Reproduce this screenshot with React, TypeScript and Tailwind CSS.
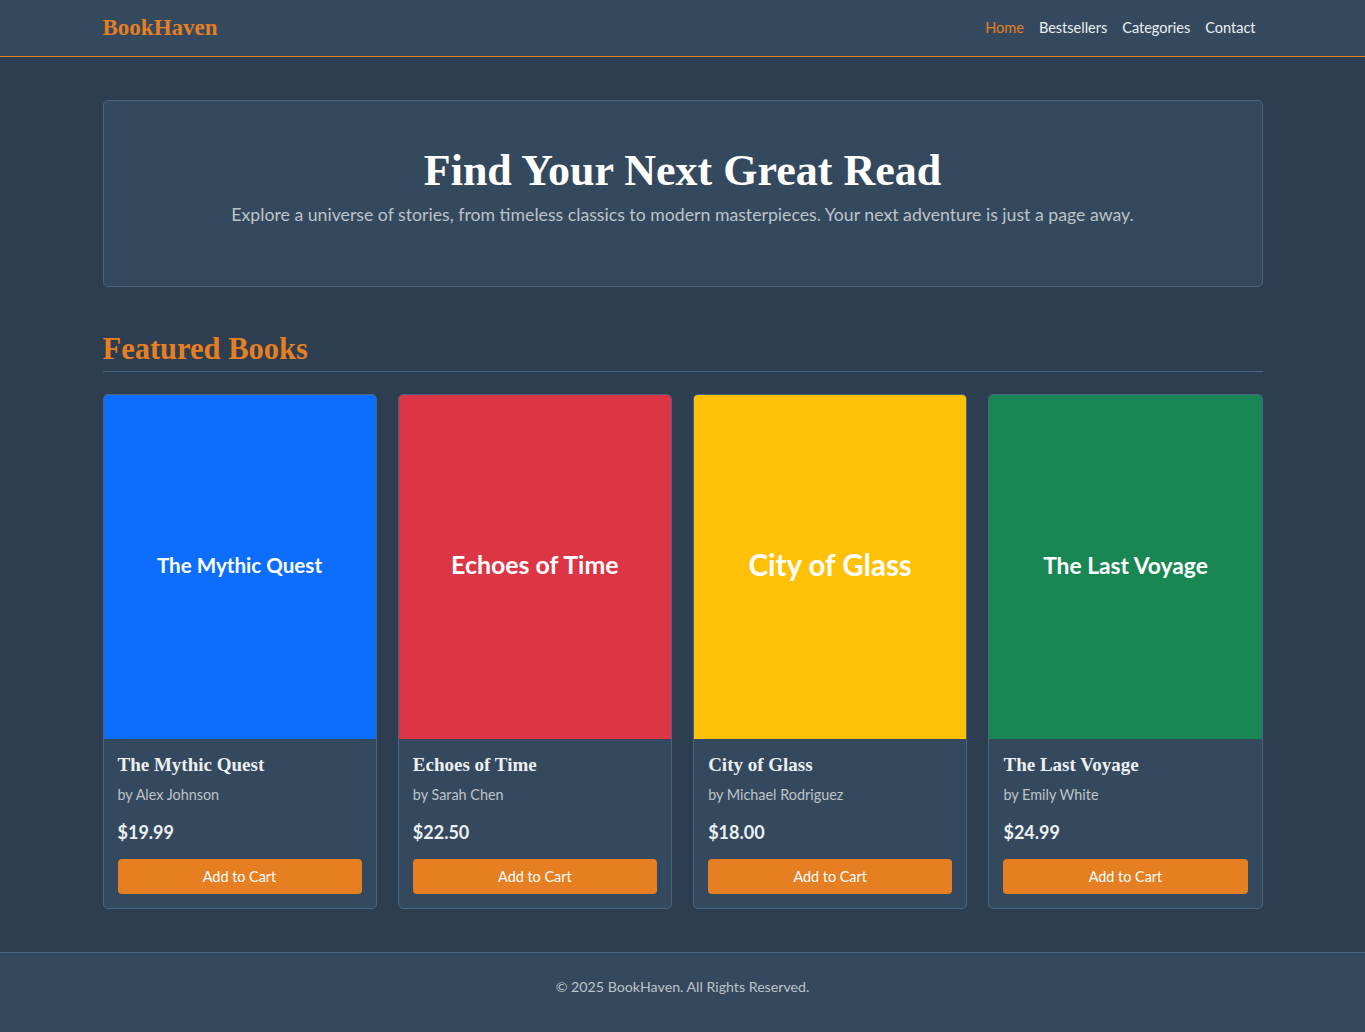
import React from "react";

const books = [
  { title: "The Mythic Quest", author: "Alex Johnson", price: "$19.99", bg: "bg-[#0d6efd]", size: "text-[20.6px]" },
  { title: "Echoes of Time", author: "Sarah Chen", price: "$22.50", bg: "bg-[#dc3545]", size: "text-[24.9px]" },
  { title: "City of Glass", author: "Michael Rodriguez", price: "$18.00", bg: "bg-[#ffc107]", size: "text-[29.5px]" },
  { title: "The Last Voyage", author: "Emily White", price: "$24.99", bg: "bg-[#198754]", size: "text-[22.8px]" },
];

const serif = "font-['Liberation_Serif',serif]";

export default function App() {
  return (
    <div className="min-h-screen flex flex-col bg-[#2c3e50] text-[#ecf0f1] font-['Lato',sans-serif]">
      <header className="bg-[#34495e] border-b border-[#e67e22]">
        <div className="w-[1160px] mx-auto h-[56px] flex items-center justify-between">
          <div className={`${serif} font-bold text-[23px] text-[#e67e22]`}>BookHaven</div>
          <nav className="flex items-center gap-[15px] text-[14.5px] pr-[7px]">
            <a className="text-[#e67e22]">Home</a>
            <a className="text-[#ecf0f1]">Bestsellers</a>
            <a className="text-[#ecf0f1]">Categories</a>
            <a className="text-[#ecf0f1]">Contact</a>
          </nav>
        </div>
      </header>

      <main className="flex-1 w-[1160px] mx-auto pt-[43px] pb-[43px]">
        <section className="bg-[#34495e] border border-[#4a6582] rounded-[5px] h-[187px] pt-[42px] text-center">
          <h1 className={`${serif} font-bold text-[44px] leading-[56px] text-white`}>Find Your Next Great Read</h1>
          <p className="text-[17.7px] text-[#bdc3c7] mt-[3px]">
            Explore a universe of stories, from timeless classics to modern masterpieces. Your next adventure is just a page away.
          </p>
        </section>

        <h2 className={`${serif} font-bold text-[30.5px] leading-[36px] text-[#e67e22] mt-[44px] pb-[4px] border-b border-[#4a6582]`}>
          Featured Books
        </h2>

        <div className="grid grid-cols-4 gap-[21.3px] mt-[22px]">
          {books.map((b) => (
            <div key={b.title} className="bg-[#34495e] border border-[#4a6582] rounded-[5px] overflow-hidden flex flex-col">
              <div className={`${b.bg} h-[344px] flex items-center justify-center`}>
                <span className={`${b.size} font-bold text-white -mt-[4px]`}>{b.title}</span>
              </div>
              <div className="px-[14px] pt-[14px] pb-[14px]">
                <h3 className={`${serif} font-bold text-[19px] leading-[24px] text-[#ecf0f1]`}>{b.title}</h3>
                <p className="text-[14.4px] leading-[20px] text-[#bdc3c7] mt-[8px]">by {b.author}</p>
                <p className="text-[18px] leading-[26px] font-bold text-[#ecf0f1] mt-[14px]">{b.price}</p>
                <button className="w-full h-[35px] mt-[14px] bg-[#e67e22] text-white text-[14.4px] rounded-[4px]">
                  Add to Cart
                </button>
              </div>
            </div>
          ))}
        </div>
      </main>

      <footer className="bg-[#34495e] border-t border-[#4a6582] h-[80px] pt-[23px] text-center">
        <p className="text-[14.2px] leading-[22px] text-[#bdc3c7]">© 2025 BookHaven. All Rights Reserved.</p>
      </footer>
    </div>
  );
}
